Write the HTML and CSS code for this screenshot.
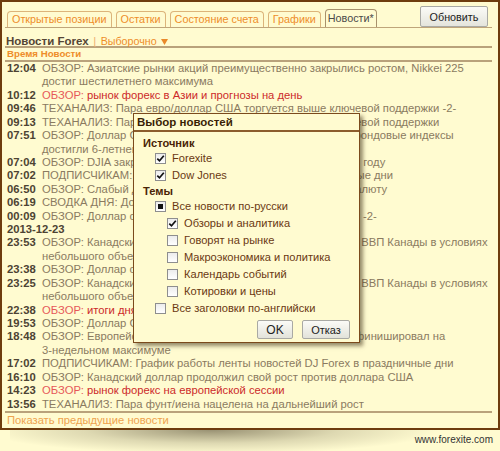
FILE: index.html
```html
<!DOCTYPE html>
<html lang="ru">
<head>
<meta charset="utf-8">
<link rel="stylesheet" href="styles.css">
</head>
<body>
<div class="page">
  <div class="panel">
    <div class="topbar">
      <div class="tabs">
        <span class="tab">Открытые позиции</span>
        <span class="tab">Остатки</span>
        <span class="tab">Состояние счета</span>
        <span class="tab">Графики</span>
        <span class="tab active">Новости*</span>
      </div>
      <button class="refresh">Обновить</button>
    </div>
    <div class="title"><b class="name">Новости Forex</b> <span class="sep">|</span> <span class="sel">Выборочно</span> <svg class="caret" width="7" height="6" viewBox="0 0 7 6"><path d="M0 0H7L3.5 6Z" fill="#e9892a"/></svg></div>
    <div class="colhead">Время Новости</div>
    <div class="list">
      <div class="row"><span class="time">12:04</span><span class="text">ОБЗОР: Азиатские рынки акций преимущественно закрылись ростом, Nikkei 225 достиг шестилетнего максимума</span></div>
      <div class="row hot"><span class="time">10:12</span><span class="text"><span class="tag">ОБЗОР:</span> рынок форекс в Азии и прогнозы на день</span></div>
      <div class="row"><span class="time">09:46</span><span class="text">ТЕХАНАЛИЗ: Пара евро/доллар США торгуется выше ключевой поддержки -2-</span></div>
      <div class="row"><span class="time">09:13</span><span class="text">ТЕХАНАЛИЗ: Пара евро/доллар США торгуется выше ключевой поддержки</span></div>
      <div class="row"><span class="time">07:51</span><span class="text">ОБЗОР: Доллар США подорожал против иены, а японские фондовые индексы достигли 6-летнего максимума</span></div>
      <div class="row"><span class="time">07:04</span><span class="text">ОБЗОР: DJIA закрылся на рекордном уровне, подъем в этом году</span></div>
      <div class="row"><span class="time">07:02</span><span class="text">ПОДПИСЧИКАМ: Расписание выхода новостей в праздничные дни</span></div>
      <div class="row"><span class="time">06:50</span><span class="text">ОБЗОР: Слабый доллар США вновь поддержал японскую валюту</span></div>
      <div class="row"><span class="time">06:19</span><span class="text">СВОДКА ДНЯ: Доллар США растет против иены</span></div>
      <div class="row"><span class="time">00:09</span><span class="text">ОБЗОР: Доллар снижается против иены, евро и фунт растут -2-</span></div>
      <div class="row date">2013-12-23</div>
      <div class="row"><span class="time">23:53</span><span class="text">ОБЗОР: Канадский доллар укрепился после данных о росте ВВП Канады в условиях небольшого объема торгов</span></div>
      <div class="row"><span class="time">23:38</span><span class="text">ОБЗОР: Доллар снизился против иены</span></div>
      <div class="row"><span class="time">23:25</span><span class="text">ОБЗОР: Канадский доллар укрепился после данных о росте ВВП Канады в условиях небольшого объема торгов</span></div>
      <div class="row hot"><span class="time">22:38</span><span class="text"><span class="tag">ОБЗОР:</span> итоги дня</span></div>
      <div class="row"><span class="time">19:53</span><span class="text">ОБЗОР: Доллар США снизился к иене</span></div>
      <div class="row"><span class="time">18:48</span><span class="text">ОБЗОР: Европейские фондовые рынки выросли, Stoxx 600 финишировал на <span class="nw">3-недельном</span> максимуме</span></div>
      <div class="row"><span class="time">17:02</span><span class="text">ПОДПИСЧИКАМ: График работы ленты новостей DJ Forex в праздничные дни</span></div>
      <div class="row"><span class="time">16:10</span><span class="text">ОБЗОР: Канадский доллар продолжил свой рост против доллара США</span></div>
      <div class="row hot"><span class="time">14:23</span><span class="text"><span class="tag">ОБЗОР:</span> рынок форекс на европейской сессии</span></div>
      <div class="row"><span class="time">13:56</span><span class="text">ТЕХАНАЛИЗ: Пара фунт/иена нацелена на дальнейший рост</span></div>
    </div>
    <div class="more">Показать предыдущие новости</div>

    <div class="dialog">
      <div class="dlg-title">Выбор новостей</div>
      <div class="dlg-body">
        <div class="group">Источник</div>
        <div class="opt lvl1"><span class="cb on"><svg width="9" height="9" viewBox="0 0 9 9"><path d="M1.3 4.6L3.5 6.8L7.8 1.8" fill="none" stroke="#111" stroke-width="1.7"/></svg></span>Forexite</div>
        <div class="opt lvl1"><span class="cb on"><svg width="9" height="9" viewBox="0 0 9 9"><path d="M1.3 4.6L3.5 6.8L7.8 1.8" fill="none" stroke="#111" stroke-width="1.7"/></svg></span>Dow Jones</div>
        <div class="group">Темы</div>
        <div class="opt lvl1"><span class="cb mixed"><span class="dot"></span></span>Все новости по-русски</div>
        <div class="opt lvl2"><span class="cb on"><svg width="9" height="9" viewBox="0 0 9 9"><path d="M1.3 4.6L3.5 6.8L7.8 1.8" fill="none" stroke="#111" stroke-width="1.7"/></svg></span>Обзоры и аналитика</div>
        <div class="opt lvl2"><span class="cb"></span>Говорят на рынке</div>
        <div class="opt lvl2"><span class="cb"></span>Макроэкономика и политика</div>
        <div class="opt lvl2"><span class="cb"></span>Календарь событий</div>
        <div class="opt lvl2"><span class="cb"></span>Котировки и цены</div>
        <div class="opt lvl1"><span class="cb"></span>Все заголовки по-английски</div>
        <div class="actions">
          <button class="btn ok">OK</button>
          <button class="btn cancel">Отказ</button>
        </div>
      </div>
    </div>
  </div>
  <div class="footer">www.forexite.com</div>
</div>
</body>
</html>
```

FILE: styles.css
```css
* { box-sizing: border-box; }

body {
  margin: 0;
  background: #fffbd0;
  font-family: "Liberation Sans", Arial, sans-serif;
}

.page {
  width: 500px;
  height: 451px;
  overflow: hidden;
}

.panel {
  position: relative;
  width: 500px;
  height: 430px;
  border: 2px solid #6e3c0e;
  padding: 0 6px 0 3px;
  background: #fffbd0;
}

.panel::after {
  content: "";
  position: absolute;
  left: 8px;
  right: 50px;
  top: 100%;
  margin-top: 2px;
  height: 24px;
  background: radial-gradient(ellipse 52% 100% at 46% 0%, rgba(70, 60, 40, 0.55), rgba(70, 60, 40, 0.18) 55%, rgba(70, 60, 40, 0) 100%);
}

/* top tabs */
.topbar {
  display: flex;
  align-items: flex-end;
  height: 26px;
  border-bottom: 1px solid #bfa57a;
}

.tabs {
  display: flex;
  align-items: flex-end;
  gap: 4px;
  margin-left: 2px;
}

.tab {
  height: 16px;
  padding: 0 4px;
  border: 1px solid #dcb47a;
  border-bottom: none;
  border-radius: 4px 4px 0 0;
  font-size: 10.8px;
  line-height: 15px;
  color: #ee8d2a;
  white-space: nowrap;
}

.tab.active {
  height: 18px;
  padding: 1px 2px 0;
  border-color: #a8916c;
  color: #4a4a4a;
}

.refresh {
  align-self: flex-start;
  margin: 4px 4px 0 auto;
  width: 68px;
  height: 21px;
  padding: 0;
  border: 1px solid #a9a9a4;
  border-radius: 2px;
  background: linear-gradient(#fbfbf7, #e4e4dc);
  font-family: "Liberation Sans", Arial, sans-serif;
  font-size: 10.8px;
  color: #222;
}

/* header rows */
.title {
  height: 20px;
  padding: 5px 0 0 1px;
  line-height: 13px;
  border-bottom: 2px solid #b9a27b;
  white-space: nowrap;
}

.title .name { color: #554535; font-size: 11.5px; }
.title .sep { color: #eeb070; font-size: 11.5px; }
.title .sel { color: #ee8d2a; font-size: 10.7px; }
.title .caret { vertical-align: 0; }

.colhead {
  height: 14px;
  padding-left: 2px;
  line-height: 12px;
  font-size: 9.7px;
  font-weight: bold;
  color: #ee8d2a;
  border-bottom: 2px solid #b9a27b;
}

/* news list */
.list {
  height: 349px;
  overflow: hidden;
}

.row {
  display: flex;
  padding-left: 2px;
  font-size: 11.25px;
  line-height: 13.42px;
}

.time {
  flex: none;
  width: 35px;
  font-weight: bold;
  color: #4d4333;
}

.text {
  flex: 1;
  color: #8a7a60;
}

.nw { white-space: nowrap; }

.row.hot .text { color: #cc2a2a; }
.row.hot .tag { color: #e65858; }

.row.date {
  font-weight: bold;
  color: #4d4333;
}

.more {
  height: 17px;
  padding: 1px 0 0 2px;
  border-top: 2px solid #b9a27b;
  font-size: 11.2px;
  line-height: 13px;
  color: #eea24e;
}

/* dialog */
.dialog {
  position: absolute;
  left: 131px;
  top: 111px;
  width: 227px;
  height: 230px;
  border: 1px solid #7b4a1c;
  background: #fffbd0;
  box-shadow: 3px 3px 4px rgba(60, 45, 20, 0.55);
  color: #6a3812;
  font-size: 11.1px;
}

.dlg-title {
  height: 18px;
  padding-left: 3px;
  line-height: 17px;
  font-size: 11.5px;
  font-weight: bold;
  color: #3a1e05;
  border-bottom: 2px solid #8c5c2c;
}

.dlg-body {
  padding: 4px 9px 0 9px;
}

.group {
  height: 14px;
  line-height: 14px;
  font-weight: bold;
  color: #4a2406;
}

.opt {
  display: flex;
  align-items: center;
  gap: 6px;
  height: 17px;
  line-height: 17px;
}

.opt.lvl1 { padding-left: 12px; }
.opt.lvl2 { padding-left: 24px; }

.cb {
  flex: none;
  display: flex;
  align-items: center;
  justify-content: center;
  width: 11px;
  height: 11px;
  border: 1px solid #8e8e8e;
  background: linear-gradient(#ececec, #ffffff);
}

.cb .dot {
  width: 5px;
  height: 5px;
  background: #111;
}

.actions {
  display: flex;
  justify-content: flex-end;
  gap: 9px;
  margin-top: 3px;
}

.btn {
  height: 19px;
  padding: 0;
  border: 1px solid #a9a9a4;
  border-radius: 2px;
  background: linear-gradient(#fbfbf7, #e2e2da);
  font-family: "Liberation Sans", Arial, sans-serif;
  font-size: 11px;
  color: #222;
}

.btn.ok { width: 36px; font-size: 12px; }
.btn.cancel { width: 48px; }

/* footer */
.footer {
  position: relative;
  padding: 4px 7px 0 0;
  text-align: right;
  font-size: 10px;
  line-height: 12px;
  color: #333;
}
```
